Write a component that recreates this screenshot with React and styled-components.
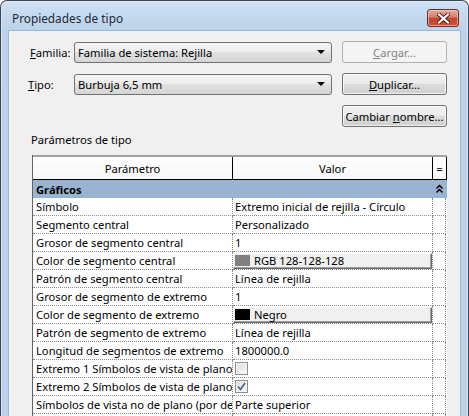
import React from "react";
import styled, { createGlobalStyle } from "styled-components";

const GlobalStyle = createGlobalStyle`
  html, body {
    margin: 0;
    padding: 0;
    overflow: hidden;
    background: #ffffff;
  }
  body {
    font-family: "Segoe UI", "Noto Sans", sans-serif;
    font-size: 11.2px;
    color: #000;
  }
`;

const Window = styled.div`
  width: 469px;
  height: 440px;
  box-sizing: border-box;
  border: 1px solid #3a4656;
  border-bottom: none;
  border-radius: 7px 7px 0 0;
  background: linear-gradient(#cfe0f2, #bad2eb 30px, #bcd3ea);
  padding: 0 7px;
  display: flex;
  flex-direction: column;
  box-shadow: inset 0 1px 0 #e6eff9, inset 1px 0 0 #dbe7f5, inset -1px 0 0 #dbe7f5;
`;

const TitleBar = styled.div`
  height: 29px;
  box-sizing: border-box;
  padding: 7px 2px 0 4px;
  display: flex;
  align-items: flex-start;
  justify-content: space-between;
`;

const Title = styled.div`
  font-size: 11.8px;
  line-height: 20px;
  color: #1e2a38;
`;

const CloseButton = styled.div`
  width: 32px;
  height: 18px;
  margin-top: 1px;
  box-sizing: border-box;
  border: 1px solid #6a2d25;
  border-radius: 3px;
  background: linear-gradient(#e9a796 0%, #d7806d 45%, #c4452f 50%, #c9523c 100%);
  box-shadow: inset 0 0 0 1px rgba(255, 220, 210, 0.55);
  display: flex;
  align-items: center;
  justify-content: center;
`;

const Content = styled.div`
  flex: 1;
  background: #f0f0f0;
  border: 1px solid #a3b6cc;
  display: flex;
  flex-direction: column;
`;

const FormGrid = styled.div`
  display: grid;
  grid-template-columns: 46px 258px 115px;
  grid-auto-rows: 22px;
  row-gap: 10px;
  padding: 10px 0 0 19px;
  align-items: center;
`;

const Label = styled.div`
  padding-left: ${(p) => p.$indent || 0}px;
  white-space: nowrap;
`;

const Combo = styled.div`
  height: 21px;
  box-sizing: border-box;
  border: 1px solid #707070;
  border-radius: 3px;
  background: linear-gradient(#f4f4f4 0%, #ececec 50%, #e0e0e0 50%, #d6d6d6 100%);
  display: flex;
  align-items: center;
  justify-content: space-between;
  padding: 0 6px 0 3px;
`;

const Arrow = styled.span`
  width: 0;
  height: 0;
  border-left: 4px solid transparent;
  border-right: 4px solid transparent;
  border-top: 4px solid #000;
`;

const Button = styled.div`
  grid-column: 3;
  justify-self: end;
  width: 105px;
  height: 22px;
  box-sizing: border-box;
  border: 1px solid ${(p) => (p.$disabled ? "#adb2b5" : "#707070")};
  border-radius: 3px;
  background: ${(p) =>
    p.$disabled
      ? "#f4f4f4"
      : "linear-gradient(#f2f2f2 0%, #ebebeb 50%, #dddddd 50%, #cfcfcf 100%)"};
  color: ${(p) => (p.$disabled ? "#838383" : "#000")};
  box-shadow: inset 0 0 0 1px ${(p) => (p.$disabled ? "transparent" : "rgba(255,255,255,0.7)")};
  display: flex;
  align-items: center;
  justify-content: center;
  white-space: nowrap;
`;

const SectionLabel = styled.div`
  margin: 5px 0 0 22px;
  line-height: 16px;
`;

const Table = styled.div`
  margin: 7px 0 0 23px;
  width: 414px;
  border-left: 1px solid #646464;
  background: #fff;
`;

const Row = styled.div`
  display: grid;
  grid-template-columns: 200px 200px 13px;
  height: ${(p) => p.$h || 18}px;
  box-sizing: border-box;
`;

const HeaderRow = styled(Row)`
  border-top: 2px solid #a0a0a0;
  border-bottom: 1px solid #000;
  background: linear-gradient(#ffffff, #f7f7f7);
  grid-template-columns: 200px 200px 14px;
`;

const HeaderCell = styled.div`
  border-right: 1px solid #000;
  display: flex;
  align-items: center;
  justify-content: center;
`;

const GroupRow = styled(Row)`
  background: #99b4d1;
  font-weight: bold;
  align-items: center;
`;

const GroupTitle = styled.div`
  grid-column: 1 / span 2;
  padding-left: 3px;
`;

const Cell = styled.div`
  border-right: 1px dotted #8a8a8a;
  border-bottom: 1px dotted #8a8a8a;
  display: flex;
  align-items: center;
  padding-left: ${(p) => p.$pad}px;
  white-space: nowrap;
  overflow: hidden;
`;

const ColorBox = styled.div`
  flex: 1;
  height: 16px;
  margin: 0 0 0 -2px;
  box-sizing: border-box;
  background: #f0f0f0;
  border: 1px solid;
  border-color: #ffffff #696969 #696969 #ffffff;
  box-shadow: inset -1px -1px 0 #a0a0a0;
  display: flex;
  align-items: center;
  padding-left: 1px;
  gap: 4px;
`;

const Swatch = styled.span`
  width: 15px;
  height: 11px;
  background: ${(p) => p.$color};
`;

const Check = styled.span`
  width: 13px;
  height: 13px;
  box-sizing: border-box;
  border: 1px solid #8e8f8f;
  background: linear-gradient(135deg, #dcdcdc, #fafafa);
  box-shadow: inset 0 0 0 1px #f4f4f4;
  display: flex;
  align-items: center;
  justify-content: center;
`;

const rows = [
  ["Símbolo", "Extremo inicial de rejilla - Círculo"],
  ["Segmento central", "Personalizado"],
  ["Grosor de segmento central", "1"],
  ["Color de segmento central", { color: "#808080", text: "RGB 128-128-128" }],
  ["Patrón de segmento central", "Línea de rejilla"],
  ["Grosor de segmento de extremo", "1"],
  ["Color de segmento de extremo", { color: "#000000", text: "Negro" }],
  ["Patrón de segmento de extremo", "Línea de rejilla"],
  ["Longitud de segmentos de extremo", "1800000.0"],
  ["Extremo 1 Símbolos de vista de plano", { check: false }],
  ["Extremo 2 Símbolos de vista de plano", { check: true }],
  ["Símbolos de vista no de plano (por defecto)", "Parte superior"],
  ["", ""],
];

function Value({ v }) {
  if (typeof v === "string") return v;
  if (v.color)
    return (
      <ColorBox>
        <Swatch $color={v.color} />
        <span>{v.text}</span>
      </ColorBox>
    );
  return (
    <Check>
      {v.check && (
        <svg width="9" height="9" viewBox="0 0 9 9">
          <path d="M1 4.5 L3.5 7.5 L8 1" fill="none" stroke="#4a5f88" strokeWidth="1.6" />
        </svg>
      )}
    </Check>
  );
}

export default function App() {
  return (
    <>
      <GlobalStyle />
      <Window>
        <TitleBar>
          <Title>Propiedades de tipo</Title>
          <CloseButton>
            <svg width="13" height="11" viewBox="0 0 13 11">
              <path d="M2 1.5 L11 9.5 M11 1.5 L2 9.5" stroke="#4a1a12" strokeWidth="4" strokeLinecap="square" />
              <path d="M2 1.5 L11 9.5 M11 1.5 L2 9.5" stroke="#ffffff" strokeWidth="2.2" strokeLinecap="square" />
            </svg>
          </CloseButton>
        </TitleBar>
        <Content>
          <FormGrid>
            <Label $indent={2}>
              <u>F</u>amilia:
            </Label>
            <Combo>
              <span>Familia de sistema: Rejilla</span>
              <Arrow />
            </Combo>
            <Button $disabled>
              <span>
                <u>C</u>argar...
              </span>
            </Button>
            <Label>
              <u>T</u>ipo:
            </Label>
            <Combo>
              <span>Burbuja 6,5 mm</span>
              <Arrow />
            </Combo>
            <Button>
              <span>
                <u>D</u>uplicar...
              </span>
            </Button>
            <Button>
              <span>
                Cambiar <u>n</u>ombre...
              </span>
            </Button>
          </FormGrid>
          <SectionLabel>Parámetros de tipo</SectionLabel>
          <Table>
            <HeaderRow $h={25}>
              <HeaderCell>Parámetro</HeaderCell>
              <HeaderCell>Valor</HeaderCell>
              <HeaderCell>=</HeaderCell>
            </HeaderRow>
            <GroupRow>
              <GroupTitle>Gráficos</GroupTitle>
              <svg width="13" height="10" viewBox="0 0 13 10">
                <path d="M3.5 4.5 L6.5 1.5 L9.5 4.5 M3.5 8.5 L6.5 5.5 L9.5 8.5" fill="none" stroke="#000" strokeWidth="1.5" />
              </svg>
            </GroupRow>
            {rows.map(([name, v], i) => (
              <Row key={i}>
                <Cell $pad={3}>{name}</Cell>
                <Cell $pad={2}>
                  <Value v={v} />
                </Cell>
                <Cell $pad={0} />
              </Row>
            ))}
          </Table>
        </Content>
      </Window>
    </>
  );
}
